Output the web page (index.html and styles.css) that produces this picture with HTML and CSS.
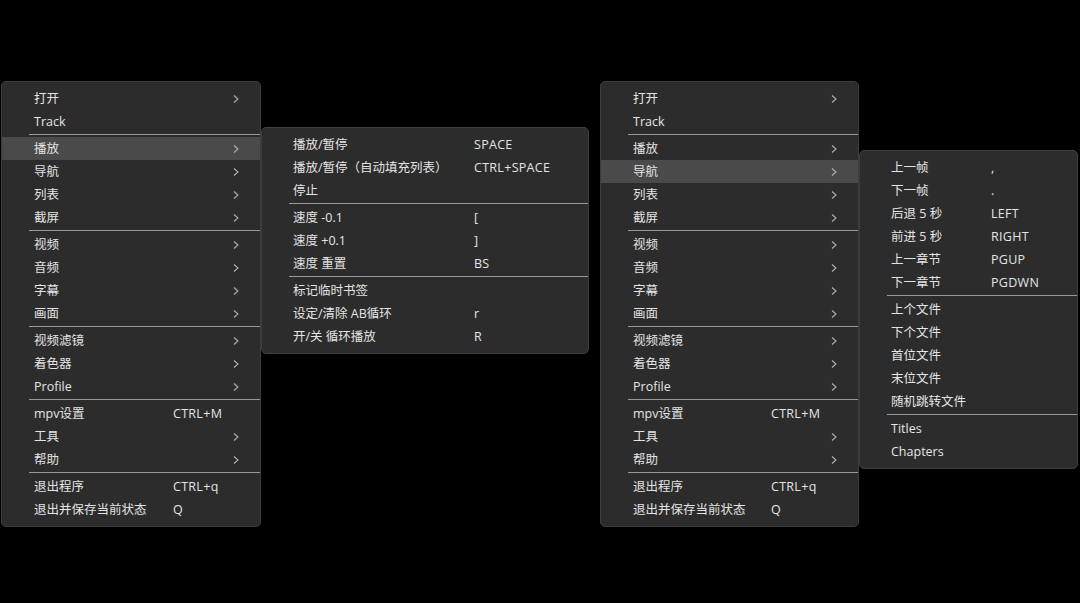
FILE: index.html
```html
<!DOCTYPE html>
<html lang="zh">
<head>
<meta charset="utf-8">
<link rel="stylesheet" href="styles.css">
</head>
<body>
<div class="stage">
  <div class="group group-left">
    <div class="menu main">
      <div class="row"><span class="lb">打开</span><span class="sc"></span><span class="ar"><svg viewBox="0 0 6 10"><polyline points="1,1.5 5,5 1,8.5"/></svg></span></div>
      <div class="row"><span class="lb">Track</span><span class="sc"></span><span class="ar"></span></div>
      <div class="sep"></div>
      <div class="row hl"><span class="lb">播放</span><span class="sc"></span><span class="ar"><svg viewBox="0 0 6 10"><polyline points="1,1.5 5,5 1,8.5"/></svg></span></div>
      <div class="row"><span class="lb">导航</span><span class="sc"></span><span class="ar"><svg viewBox="0 0 6 10"><polyline points="1,1.5 5,5 1,8.5"/></svg></span></div>
      <div class="row"><span class="lb">列表</span><span class="sc"></span><span class="ar"><svg viewBox="0 0 6 10"><polyline points="1,1.5 5,5 1,8.5"/></svg></span></div>
      <div class="row"><span class="lb">截屏</span><span class="sc"></span><span class="ar"><svg viewBox="0 0 6 10"><polyline points="1,1.5 5,5 1,8.5"/></svg></span></div>
      <div class="sep"></div>
      <div class="row"><span class="lb">视频</span><span class="sc"></span><span class="ar"><svg viewBox="0 0 6 10"><polyline points="1,1.5 5,5 1,8.5"/></svg></span></div>
      <div class="row"><span class="lb">音频</span><span class="sc"></span><span class="ar"><svg viewBox="0 0 6 10"><polyline points="1,1.5 5,5 1,8.5"/></svg></span></div>
      <div class="row"><span class="lb">字幕</span><span class="sc"></span><span class="ar"><svg viewBox="0 0 6 10"><polyline points="1,1.5 5,5 1,8.5"/></svg></span></div>
      <div class="row"><span class="lb">画面</span><span class="sc"></span><span class="ar"><svg viewBox="0 0 6 10"><polyline points="1,1.5 5,5 1,8.5"/></svg></span></div>
      <div class="sep"></div>
      <div class="row"><span class="lb">视频滤镜</span><span class="sc"></span><span class="ar"><svg viewBox="0 0 6 10"><polyline points="1,1.5 5,5 1,8.5"/></svg></span></div>
      <div class="row"><span class="lb">着色器</span><span class="sc"></span><span class="ar"><svg viewBox="0 0 6 10"><polyline points="1,1.5 5,5 1,8.5"/></svg></span></div>
      <div class="row"><span class="lb">Profile</span><span class="sc"></span><span class="ar"><svg viewBox="0 0 6 10"><polyline points="1,1.5 5,5 1,8.5"/></svg></span></div>
      <div class="sep"></div>
      <div class="row"><span class="lb">mpv设置</span><span class="sc">CTRL+M</span><span class="ar"></span></div>
      <div class="row"><span class="lb">工具</span><span class="sc"></span><span class="ar"><svg viewBox="0 0 6 10"><polyline points="1,1.5 5,5 1,8.5"/></svg></span></div>
      <div class="row"><span class="lb">帮助</span><span class="sc"></span><span class="ar"><svg viewBox="0 0 6 10"><polyline points="1,1.5 5,5 1,8.5"/></svg></span></div>
      <div class="sep"></div>
      <div class="row"><span class="lb">退出程序</span><span class="sc">CTRL+q</span><span class="ar"></span></div>
      <div class="row"><span class="lb">退出并保存当前状态</span><span class="sc">Q</span><span class="ar"></span></div>
    </div>
    <div class="menu sub sub-play">
      <div class="row"><span class="lb">播放/暂停</span><span class="sc">SPACE</span></div>
      <div class="row"><span class="lb">播放/暂停（自动填充列表）</span><span class="sc">CTRL+SPACE</span></div>
      <div class="row"><span class="lb">停止</span><span class="sc"></span></div>
      <div class="sep"></div>
      <div class="row"><span class="lb">速度 -0.1</span><span class="sc">[</span></div>
      <div class="row"><span class="lb">速度 +0.1</span><span class="sc">]</span></div>
      <div class="row"><span class="lb">速度 重置</span><span class="sc">BS</span></div>
      <div class="sep"></div>
      <div class="row"><span class="lb">标记临时书签</span><span class="sc"></span></div>
      <div class="row"><span class="lb">设定/清除 AB循环</span><span class="sc">r</span></div>
      <div class="row"><span class="lb">开/关 循环播放</span><span class="sc">R</span></div>
    </div>
  </div>

  <div class="group group-right">
    <div class="menu main">
      <div class="row"><span class="lb">打开</span><span class="sc"></span><span class="ar"><svg viewBox="0 0 6 10"><polyline points="1,1.5 5,5 1,8.5"/></svg></span></div>
      <div class="row"><span class="lb">Track</span><span class="sc"></span><span class="ar"></span></div>
      <div class="sep"></div>
      <div class="row"><span class="lb">播放</span><span class="sc"></span><span class="ar"><svg viewBox="0 0 6 10"><polyline points="1,1.5 5,5 1,8.5"/></svg></span></div>
      <div class="row hl"><span class="lb">导航</span><span class="sc"></span><span class="ar"><svg viewBox="0 0 6 10"><polyline points="1,1.5 5,5 1,8.5"/></svg></span></div>
      <div class="row"><span class="lb">列表</span><span class="sc"></span><span class="ar"><svg viewBox="0 0 6 10"><polyline points="1,1.5 5,5 1,8.5"/></svg></span></div>
      <div class="row"><span class="lb">截屏</span><span class="sc"></span><span class="ar"><svg viewBox="0 0 6 10"><polyline points="1,1.5 5,5 1,8.5"/></svg></span></div>
      <div class="sep"></div>
      <div class="row"><span class="lb">视频</span><span class="sc"></span><span class="ar"><svg viewBox="0 0 6 10"><polyline points="1,1.5 5,5 1,8.5"/></svg></span></div>
      <div class="row"><span class="lb">音频</span><span class="sc"></span><span class="ar"><svg viewBox="0 0 6 10"><polyline points="1,1.5 5,5 1,8.5"/></svg></span></div>
      <div class="row"><span class="lb">字幕</span><span class="sc"></span><span class="ar"><svg viewBox="0 0 6 10"><polyline points="1,1.5 5,5 1,8.5"/></svg></span></div>
      <div class="row"><span class="lb">画面</span><span class="sc"></span><span class="ar"><svg viewBox="0 0 6 10"><polyline points="1,1.5 5,5 1,8.5"/></svg></span></div>
      <div class="sep"></div>
      <div class="row"><span class="lb">视频滤镜</span><span class="sc"></span><span class="ar"><svg viewBox="0 0 6 10"><polyline points="1,1.5 5,5 1,8.5"/></svg></span></div>
      <div class="row"><span class="lb">着色器</span><span class="sc"></span><span class="ar"><svg viewBox="0 0 6 10"><polyline points="1,1.5 5,5 1,8.5"/></svg></span></div>
      <div class="row"><span class="lb">Profile</span><span class="sc"></span><span class="ar"><svg viewBox="0 0 6 10"><polyline points="1,1.5 5,5 1,8.5"/></svg></span></div>
      <div class="sep"></div>
      <div class="row"><span class="lb">mpv设置</span><span class="sc">CTRL+M</span><span class="ar"></span></div>
      <div class="row"><span class="lb">工具</span><span class="sc"></span><span class="ar"><svg viewBox="0 0 6 10"><polyline points="1,1.5 5,5 1,8.5"/></svg></span></div>
      <div class="row"><span class="lb">帮助</span><span class="sc"></span><span class="ar"><svg viewBox="0 0 6 10"><polyline points="1,1.5 5,5 1,8.5"/></svg></span></div>
      <div class="sep"></div>
      <div class="row"><span class="lb">退出程序</span><span class="sc">CTRL+q</span><span class="ar"></span></div>
      <div class="row"><span class="lb">退出并保存当前状态</span><span class="sc">Q</span><span class="ar"></span></div>
    </div>
    <div class="menu sub sub-nav">
      <div class="row"><span class="lb">上一帧</span><span class="sc">,</span></div>
      <div class="row"><span class="lb">下一帧</span><span class="sc">.</span></div>
      <div class="row"><span class="lb">后退 5 秒</span><span class="sc">LEFT</span></div>
      <div class="row"><span class="lb">前进 5 秒</span><span class="sc">RIGHT</span></div>
      <div class="row"><span class="lb">上一章节</span><span class="sc">PGUP</span></div>
      <div class="row"><span class="lb">下一章节</span><span class="sc">PGDWN</span></div>
      <div class="sep"></div>
      <div class="row"><span class="lb">上个文件</span><span class="sc"></span></div>
      <div class="row"><span class="lb">下个文件</span><span class="sc"></span></div>
      <div class="row"><span class="lb">首位文件</span><span class="sc"></span></div>
      <div class="row"><span class="lb">末位文件</span><span class="sc"></span></div>
      <div class="row"><span class="lb">随机跳转文件</span><span class="sc"></span></div>
      <div class="sep"></div>
      <div class="row"><span class="lb">Titles</span><span class="sc"></span></div>
      <div class="row"><span class="lb">Chapters</span><span class="sc"></span></div>
    </div>
  </div>
</div>
</body>
</html>
```

FILE: styles.css
```css
html, body {
  margin: 0;
  padding: 0;
  background: #000;
  height: 100%;
  overflow: hidden;
}

.stage {
  display: flex;
  align-items: flex-start;
  padding-top: 81px;
  font-family: "Open Sans", "Noto Sans CJK SC", sans-serif;
  font-size: 12.5px;
  color: #e4e4e4;
}

.group {
  position: relative;
}

.group-left {
  margin-left: 1px;
}

.group-right {
  margin-left: 339px;
}

.menu {
  box-sizing: border-box;
  background: #2c2c2c;
  border: 1px solid #3d3d3d;
  border-radius: 5px;
  padding: 5px 0;
}

.main {
  width: 260px;
  --lbw: 139px;
}

.group-right .main {
  width: 259px;
  --lbw: 138px;
}

.sub {
  position: absolute;
  z-index: 2;
}

.sub-play {
  left: 260px;
  top: 46px;
  width: 328px;
  --lbw: 181px;
  --pl: 31px;
}

.sub-nav {
  left: 259px;
  top: 69px;
  width: 219px;
  --lbw: 100px;
  --pl: 31px;
}

.row {
  display: grid;
  grid-template-columns: var(--lbw) 1fr;
  height: 23px;
  line-height: 23px;
  padding-left: var(--pl, 32px);
  white-space: nowrap;
}

.main .row {
  grid-template-columns: var(--lbw) 1fr 16px;
  padding-right: 16px;
}

.row.hl {
  background: #4a4a4a;
}

.sc {
  letter-spacing: 0.3px;
}

.ar {
  display: flex;
  align-items: center;
  justify-content: center;
}

.ar svg {
  width: 6px;
  height: 10px;
  fill: none;
  stroke: #b0b0b0;
  stroke-width: 1.1;
}

.sep {
  height: 1px;
  background: #999;
  margin: 1px 0 2px 27px;
}
```
